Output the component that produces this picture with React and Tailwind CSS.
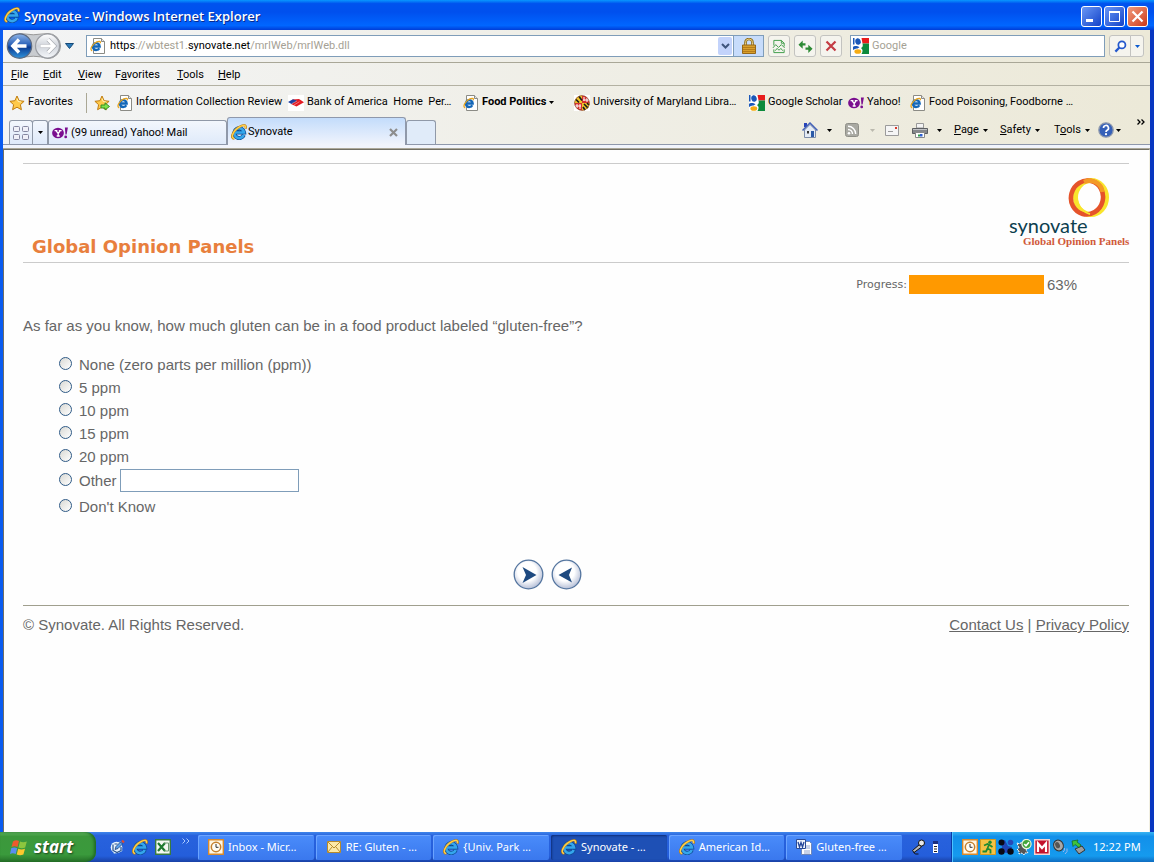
import React from 'react';

const ui = "font-[Roboto,sans-serif]";

function IELogo({ className = 'size-4' }) {
  return (
    <svg viewBox="0 0 16 16" className={`shrink-0 ${className}`} aria-hidden="true">
      <path d="M12.800 11A4.900 4.900 0 1 1 13.100 8.600H4" fill="none" stroke="#0b478f" strokeWidth="4" />
      <path d="M12.700 10.900A4.900 4.900 0 1 1 13 8.500H4.200" fill="none" stroke="#35a6ec" strokeWidth="2.700" />
      <path d="M3.300 14.700C-1.400 14.600 1.900 6 9.200 2.400C13 .5 15.800.9 14.500 4.600" fill="none" stroke="#b9780c" strokeWidth="2.200" />
      <path d="M3.200 14.500C-1.100 13.900 2.300 6 9.400 2.400C12.800.8 15.300 1 14.400 4.300" fill="none" stroke="#ffd04a" strokeWidth="1.400" />
    </svg>
  );
}

function IEPage() {
  return (
    <svg viewBox="0 0 16 16" className="size-4 shrink-0" aria-hidden="true">
      <path d="M3.500.5h8l3 3v12h-11z" fill="#fff" stroke="#8b8b85" />
      <path d="M11.500.5v3h3" fill="#e6e6e6" stroke="#8b8b85" />
      <path d="M9.300 10.200A3.400 3.400 0 1 1 9.700 8.500H3.500" fill="none" stroke="#1467b8" strokeWidth="2.300" />
      <path d="M2.200 12.800C-1 11.800 2.500 5.800 6.800 3.900C9 3 11 3.100 10.200 5.200" fill="none" stroke="#e9a41b" strokeWidth="1.300" />
    </svg>
  );
}

function Star({ add }) {
  return (
    <svg viewBox="0 0 16 16" className="size-4 shrink-0" aria-hidden="true">
      <path d="M8 1l2.100 4.700 5 .6-3.700 3.400 1 5L8 12.200l-4.400 2.500 1-5L.9 6.300l5-.6z" fill="#ffc94a" stroke="#c07c10" />
      <path d="M8 3.500l1.200 3 3 .5" fill="none" stroke="#fff3b8" />
      {add && <path d="M7 10h4V7.800l4.500 3.700L11 15v-2H7z" fill="#7fe04a" stroke="#2f8a1d" strokeWidth=".9" />}
    </svg>
  );
}

function GoogleIcon() {
  return (
    <svg viewBox="0 0 16 16" className="size-4 shrink-0" aria-hidden="true">
      <path d="M0 0h16v16H0z" fill="#fff" />
      <path d="M8.500 0H16v5.500H9.500z" fill="#e81c1c" />
      <path d="M9.500 5.500H16V16H8.500c1.500-2.500 1.500-4.500-.5-6 2-1 2-2.500 1.500-4.500z" fill="#0c8a3c" />
      <path d="M0 0h1.500v6.500H0z" fill="#1b58b8" />
      <ellipse cx="5" cy="3.500" rx="2.700" ry="3.300" fill="#1b58b8" transform="rotate(-15 5 3.500)" />
      <path d="M0 9c1-1.500 4.500-1.500 6.500.3L4.500 10.500C3 10.300 1.500 10.800 0 12z" fill="#1b58b8" />
      <ellipse cx="4.800" cy="13.500" rx="3.400" ry="2.300" fill="#f5ac14" />
    </svg>
  );
}

function YahooIcon() {
  return (
    <svg viewBox="0 0 16 16" className="size-4 shrink-0" aria-hidden="true">
      <ellipse cx="6" cy="8" rx="5.900" ry="5.200" fill="#7b0f8f" />
      <path d="M2.600 5.700h2.800M6.800 5.700h2.800M4 5.700l2.200 2.800v2.500M8.200 5.700l-2 2.800M4.700 11h3" stroke="#fff" strokeWidth="1.300" fill="none" />
      <path d="M12.900 2.500h3l-1.300 7h-1.200z" fill="#7b0f8f" />
      <circle cx="13.700" cy="11.900" r="1.400" fill="#7b0f8f" />
    </svg>
  );
}

function BankIcon() {
  return (
    <svg viewBox="0 0 16 16" className="size-4 shrink-0" aria-hidden="true">
      <path d="M0 0h16v16H0z" fill="#fff" />
      <path d="M4.500 4.500L11 4l5 3.200-7.500 4.300L3 9z" fill="#e31b23" />
      <path d="M0 7l5-2.800 4 1.600L3.500 9z" fill="#1d3fa0" />
      <path d="M3.500 8.800L9 6M6 10l5.500-3.300" stroke="#fff" strokeWidth=".4" />
    </svg>
  );
}

function MarylandIcon() {
  return (
    <svg viewBox="0 0 16 16" className="size-4 shrink-0" aria-hidden="true">
      <path d="M0 0h16v16H0z" fill="#fff" />
      <circle cx="8" cy="8" r="7.600" fill="#d83030" />
      <path d="M8 8V.4A7.600 7.600 0 0 0 .4 8z" fill="#f2c52a" />
      <path d="M8 8v7.600A7.600 7.600 0 0 0 15.600 8z" fill="#f2c52a" />
      <path d="M2 4.500l3 3M5 1.500l3 4M10 9l4 4M13 8l2 2M9 12l2 3" stroke="#1a1a1a" strokeWidth="1.700" />
      <path d="M10 2v4M13 3v4M9 5h6M3 9v4M6 9v5M1 11h6" stroke="#fff" strokeWidth="1" />
      <circle cx="8" cy="8" r="7.400" fill="none" stroke="#7a4a2a" strokeWidth=".6" />
    </svg>
  );
}

function Caret({ className = 'text-black' }) {
  return (
    <svg viewBox="0 0 5 3" className={`h-[3px] w-[5px] shrink-0 ${className}`} aria-hidden="true">
      <path d="M0 0h5L2.500 3z" fill="currentColor" />
    </svg>
  );
}

function Clock() {
  return (
    <svg viewBox="0 0 16 16" className="size-4 shrink-0" aria-hidden="true">
      <path d="M.7.7h14.600v14.600H.7z" fill="#fff8e6" stroke="#d98a2b" strokeWidth="1.400" />
      <circle cx="8" cy="8" r="4.700" fill="#fffdf5" stroke="#c4802e" strokeWidth="1.500" />
      <path d="M8 5v3.300h2.500" fill="none" stroke="#333" />
    </svg>
  );
}

function TitleBar() {
  const base = 'flex size-[21px] items-center justify-center rounded-[3px] border border-white';
  return (
    <header className="flex h-[30px] shrink-0 items-center bg-[linear-gradient(#0997ff_0,#0053ee_12%,#0050ee_40%,#0066ff_85%,#003dd7_100%)] pr-[6px] pl-1">
      <IELogo />
      <h1 className="ml-1 flex-1 truncate pt-1 font-['Open_Sans',sans-serif] text-[13px] font-semibold text-white [text-shadow:1px_1px_#0a2a8a]">
        Synovate - Windows Internet Explorer
      </h1>
      <div className="flex gap-[2px] pt-[3px]">
        <button aria-label="Minimize" className={`${base} bg-linear-to-br from-[#6a96f5] to-[#1440c8]`}>
          <svg viewBox="0 0 19 19" className="size-[19px]"><path d="M4 12h7v3H4z" fill="#fff" /></svg>
        </button>
        <button aria-label="Maximize" className={`${base} bg-linear-to-br from-[#6a96f5] to-[#1440c8]`}>
          <svg viewBox="0 0 19 19" className="size-[19px]"><path d="M4.500 5v9.500h10V5M4 5h11" fill="none" stroke="#fff" /><path d="M4 4h11v2H4z" fill="#fff" /></svg>
        </button>
        <button aria-label="Close" className={`${base} bg-linear-to-br from-[#f09a7c] to-[#cc3410]`}>
          <svg viewBox="0 0 19 19" className="size-[19px]"><path d="M4.500 4.500l10 10M14.500 4.500l-10 10" stroke="#fff" strokeWidth="2.200" /></svg>
        </button>
      </div>
    </header>
  );
}

const toolBtn = 'flex h-[22px] items-center justify-center border border-[#c3c3c0] bg-[#f5f4ee]';

function AddressRow() {
  return (
    <div className="flex h-[33px] items-center border-b border-[#a9a797] pr-[6px] pl-[3px]">
      <svg viewBox="0 0 56 28" className="h-7 w-14 shrink-0" role="img" aria-label="Back and forward">
        <defs>
          <linearGradient id="nb" x1="0" y1="0" x2="0" y2="1"><stop offset="0" stopColor="#8db4e8" /><stop offset=".45" stopColor="#2c62b8" /><stop offset=".55" stopColor="#0c3c92" /><stop offset="1" stopColor="#2f93dc" /></linearGradient>
          <linearGradient id="nf" x1="0" y1="0" x2="0" y2="1"><stop offset="0" stopColor="#fff" /><stop offset=".5" stopColor="#cfd3da" /><stop offset="1" stopColor="#f6f8fb" /></linearGradient>
        </defs>
        <path d="M13 1.500Q27 4 42 1.500A12.500 12.500 0 0 1 42 26.500Q27 22 13 26.500z" fill="#c9ccd0" stroke="#999" />
        <circle cx="13.500" cy="14" r="12.200" fill="url(#nb)" stroke="#5d6a80" strokeWidth="1.200" />
        <circle cx="41.500" cy="14" r="12" fill="url(#nf)" stroke="#9a9da3" strokeWidth="1.200" />
        <path d="M7 14h13.500M13 7.500L6.800 14l6.200 6.500" fill="none" stroke="#fff" strokeWidth="3.400" />
        <path d="M34.500 14H48M42 7.500l6.200 6.500-6.200 6.500" fill="none" stroke="#a6a9b0" strokeWidth="4.200" />
        <path d="M34.500 14H48M42 7.500l6.200 6.500-6.200 6.500" fill="none" stroke="#fff" strokeWidth="3" />
      </svg>
      <button aria-label="Recent pages" className="mr-3 ml-[3px] flex w-[9px]">
        <svg viewBox="0 0 9 6" className="h-[6px] w-[9px]"><path d="M.5.5h8L4.500 5.500z" fill="#2a7ab8" stroke="#174a78" /></svg>
      </button>
      <div className="flex h-[22px] flex-1 items-center border border-[#7f9db9] bg-white pl-[3px]">
        <IEPage />
        <div role="textbox" aria-label="Address" contentEditable suppressContentEditableWarning className="ml-1 flex-1 pt-px text-[11px] whitespace-nowrap text-[#a5a194] outline-none">
          <span className="text-black">https</span>://wbtest1.<span className="text-black">synovate.net</span>/mrIWeb/mrIWeb.dll
        </div>
        <button aria-label="Show address history" className="mr-px flex h-[18px] w-[14px] items-center justify-center rounded-[2px] bg-[#c3d3fb]">
          <svg viewBox="0 0 9 6" className="h-[6px] w-[9px]"><path d="M1 1l3.500 3.500L8 1" fill="none" stroke="#3f557d" strokeWidth="2" /></svg>
        </button>
        <button aria-label="Security report" className="flex h-5 w-[30px] items-center justify-center border-l border-[#7f9db9] bg-[#c7dcfb]">
          <svg viewBox="0 0 14 16" className="h-4 w-[14px]">
            <path d="M3.500 8V4.500a3.500 3.500 0 0 1 7 0V8" fill="none" stroke="#8c6a16" strokeWidth="2.600" />
            <path d="M3.500 8V4.500a3.500 3.500 0 0 1 7 0V8" fill="none" stroke="#e8cf86" strokeWidth="1" />
            <path d="M.5 7h13v8.500H.5z" fill="#d9a02c" stroke="#96681a" />
            <path d="M1 9.500h12M1 11.500h12M1 13.500h12" stroke="#b67c1a" />
          </svg>
        </button>
      </div>
      <button aria-label="Compatibility view" className={`${toolBtn} ml-1 w-[22px] rounded-[3px]`}>
        <svg viewBox="0 0 14 16" className="h-[15px] w-[14px]" fill="none" stroke="#3a9a44"><path d="M1.500 7V1.500h8l3 3V8M9.500 1.500v3h3M1.500 11v3.500h11V11" /><path d="M.5 9.500l3-3.500 3 3 3-3 3.500 3.500M3 12.500l2-2.500 2 2 2-2 2 2.500" /></svg>
      </button>
      <button aria-label="Refresh" className={`${toolBtn} ml-1 w-[22px] rounded-[3px]`}>
        <svg viewBox="0 0 16 16" className="size-[15px]" fill="#2c8a34"><path d="M.5 6L5 1.500V4.500H8V7H5V10.500z" /><path d="M15.500 10.500L11 6v3H8v2.500h3V15z" /></svg>
      </button>
      <button aria-label="Stop" className={`${toolBtn} ml-1 w-[22px] rounded-[3px]`}>
        <svg viewBox="0 0 12 12" className="size-3"><path d="M1.500 1.500l9 9M10.500 1.500l-9 9" stroke="#c43c44" strokeWidth="2.200" /></svg>
      </button>
      <label className="ml-2 flex h-[22px] w-[255px] items-center border border-[#7f9db9] bg-white pl-[2px]">
        <GoogleIcon />
        <input aria-label="Search Google" placeholder="Google" className="ml-[3px] w-full min-w-0 pt-px text-[11px] outline-none placeholder:text-[#a5a194]" />
      </label>
      <button aria-label="Search" className={`${toolBtn} ml-1 w-[22px] rounded-l-[3px]`}>
        <svg viewBox="0 0 14 14" className="size-[13px]"><circle cx="8.500" cy="5.300" r="3.800" fill="#fff" stroke="#2458cc" strokeWidth="1.900" /><path d="M5.800 8L1.500 12.500" stroke="#2458cc" strokeWidth="2.400" /></svg>
      </button>
      <button aria-label="Search options" className={`${toolBtn} -ml-px w-[14px] rounded-r-[3px]`}><Caret className="text-[#0a5ad0]" /></button>
    </div>
  );
}

function MenuRow() {
  const items = [['', 'F', 'ile', 'w-[32px]'], ['', 'E', 'dit', 'w-[35px]'], ['', 'V', 'iew', 'w-[37px]'], ['F', 'a', 'vorites', 'w-[62px]'], ['', 'T', 'ools', 'w-[41px]'], ['', 'H', 'elp', 'w-[40px]']];
  return (
    <nav aria-label="Menu bar" className="flex h-[23px] items-center border-b border-[#b3b1a2] pt-[2px] pl-2 text-[11px]">
      {items.map(([a, b, c, w]) => (
        <button key={b + c} className={`${w} text-left whitespace-nowrap`}>{a}<span className="underline">{b}</span>{c}</button>
      ))}
    </nav>
  );
}

function Fav({ icon, className, children }) {
  return <a href="#" className={`flex items-center gap-[3px] whitespace-nowrap ${className}`}>{icon}{children}</a>;
}

function FavoritesRow() {
  return (
    <nav aria-label="Favorites bar" className="flex h-8 items-center pt-px pl-[6px] text-[11px]">
      <button className="flex w-[77px] items-center gap-[3px]"><Star />Favorites</button>
      <div className="h-5 w-px bg-[#aaa795]" />
      <button aria-label="Add to favorites bar" className="w-[30px] pl-[7px]"><Star add /></button>
      <Fav className="w-[171px]" icon={<IEPage />}>Information Collection Review</Fav>
      <Fav className="w-[175px]" icon={<BankIcon />}>Bank of America&nbsp; Home&nbsp; Per…</Fav>
      <Fav className="w-[111px] font-bold" icon={<IEPage />}>Food Politics <Caret /></Fav>
      <Fav className="w-[175px]" icon={<MarylandIcon />}>University of Maryland Libra…</Fav>
      <Fav className="w-[99px]" icon={<GoogleIcon />}>Google Scholar</Fav>
      <Fav className="w-[62px]" icon={<YahooIcon />}>Yahoo!</Fav>
      <Fav icon={<IEPage />}>Food Poisoning, Foodborne …</Fav>
    </nav>
  );
}

function TabRow() {
  const tab = 'flex h-6 items-center rounded-t-[3px] border border-b-0 border-[#9099a8] bg-linear-to-b from-[#f3f7fd] to-[#dfeafa]';
  return (
    <div className="flex h-[27px] items-end border-b border-[#8f98ab] pl-[6px] text-[11px]">
      <button aria-label="Quick tabs" className={`${tab} w-[24px] justify-center`}>
        <svg viewBox="0 0 16 14" className="h-[14px] w-4" fill="#f0f0f8" stroke="#8487a0"><rect x=".5" y=".5" width="6" height="5" rx="1" /><rect x="9.500" y=".5" width="6" height="5" rx="1" /><rect x=".5" y="8.500" width="6" height="5" rx="1" /><rect x="9.500" y="8.500" width="6" height="5" rx="1" /></svg>
      </button>
      <button aria-label="Tab list" className={`${tab} -ml-px w-[16px] justify-center`}><Caret /></button>
      <button className={`${tab} w-[179px] gap-[3px] pt-px pl-[3px] whitespace-nowrap`}><YahooIcon />(99 unread) Yahoo! Mail</button>
      <div className="-mb-px flex h-7 w-[179px] items-center rounded-t-[3px] border border-b-0 border-[#8f98ab] bg-linear-to-b from-[#c3dcfb] to-[#f1f4fc] pt-px pr-[7px] pl-[3px]">
        <IELogo />
        <span className="flex-1 pl-px">Synovate</span>
        <button aria-label="Close tab" className="flex"><svg viewBox="0 0 9 9" className="size-[9px]"><path d="M1 1l7 7M8 1L1 8" stroke="#8d8d8d" strokeWidth="2.200" /></svg></button>
      </div>
      <button aria-label="New tab" className="h-6 w-[30px] rounded-t-[3px] border border-b-0 border-[#9099a8] bg-[#e0ebf9]" />
      <div className="flex-1" />
      <div className="flex h-[27px] items-center pb-px whitespace-nowrap">
        <button aria-label="Home" className="flex w-[43px] items-center gap-[9px]">
          <svg viewBox="0 0 16 16" className="size-4"><path d="M2 1h3v4H2z" fill="#2743b8" /><path d="M2.500 8L8 2.500 13.500 8v7.500h-11z" fill="#e4ebf5" stroke="#7d8ca8" /><path d="M.5 8.500L8 1l7.500 7.500" fill="none" stroke="#4361b8" strokeWidth="1.500" /><path d="M9 9h3v6H9z" fill="#2b5aa8" /><path d="M5 9h2v2.500H5z" fill="#333" /></svg>
          <Caret />
        </button>
        <button aria-label="Feeds" className="flex w-10 items-center gap-[11px]">
          <svg viewBox="0 0 14 14" className="size-[14px]"><rect x=".5" y=".5" width="13" height="13" rx="2" fill="#a9a9a2" stroke="#8f8f88" /><circle cx="4" cy="10.200" r="1.300" fill="#fff" /><path d="M3 6.500a4.500 4.500 0 0 1 4.500 4.500M3 3.300a7.700 7.700 0 0 1 7.700 7.700" fill="none" stroke="#fff" strokeWidth="1.400" /></svg>
          <Caret className="text-[#bbb9ae]" />
        </button>
        <button aria-label="Read mail" className="w-[27px]">
          <svg viewBox="0 0 14 11" className="h-[11px] w-[14px]"><path d="M.5.5h13v10H.5z" fill="#f5f5f5" stroke="#9b9b9b" /><path d="M10 2h2v2h-2z" fill="#d93a2b" /><path d="M3 6.500h5" stroke="#999" /></svg>
        </button>
        <button aria-label="Print" className="flex w-[42px] items-center gap-[9px]">
          <svg viewBox="0 0 16 16" className="size-4"><path d="M4.500 1.500h7V6h-7z" fill="#f4f4f4" stroke="#999" /><path d="M.5 6.500h15v5H.5z" fill="#85878b" stroke="#5d5f62" /><path d="M1 7.500h14" stroke="#c0c2c5" /><path d="M3.500 10.500h9v5h-9z" fill="#fff" stroke="#888" /><path d="M6 12.500h2v2H6z" fill="#2e9b4b" /><path d="M8 12h2.500v2.500H8z" fill="#2c5fd0" /></svg>
          <Caret />
        </button>
        <button className="flex w-[46px] items-center gap-1"><span><u>P</u>age</span><Caret /></button>
        <button className="flex w-[54px] items-center gap-1"><span><u>S</u>afety</span><Caret /></button>
        <button className="flex w-[44px] items-center gap-1"><span>T<u>o</u>ols</span><Caret /></button>
        <button aria-label="Help" className="flex w-[39px] items-center gap-[2px]">
          <svg viewBox="0 0 16 16" className="size-4"><circle cx="8" cy="8" r="7.200" fill="#3560b8" stroke="#8d98ad" strokeWidth="1.300" /><path d="M5.500 6a2.500 2.500 0 1 1 3.600 2.200Q8 8.800 8 10" fill="none" stroke="#fff" strokeWidth="1.700" /><circle cx="8" cy="12.200" r="1.100" fill="#fff" /></svg>
          <Caret />
        </button>
        <button aria-label="More commands" className="self-start pr-[5px]">
          <svg viewBox="0 0 8 6" className="mt-[2px] h-[6px] w-2"><path d="M.5.5L3 3 .5 5.500M4.500.5L7 3 4.500 5.500" fill="none" stroke="#000" strokeWidth="1.300" /></svg>
        </button>
      </div>
    </div>
  );
}

function SurveyHeader() {
  return (
    <div className="flex h-[100px] items-end justify-between border-y border-[#cbcbcb]">
      <h2 className="pb-[3px] pl-[9px] font-['DejaVu_Sans',sans-serif] text-[18px] leading-6 font-bold text-[#e87f3d]">Global Opinion Panels</h2>
      <div className="flex w-[120px] flex-col pb-[15px] text-[#0d3f4f]">
        <svg viewBox="0 0 44 42" className="-mb-1 ml-[58px] h-[42px] w-[44px]" aria-hidden="true">
          <ellipse cx="24" cy="20.500" rx="15.500" ry="17" fill="none" stroke="#f9e52c" strokeWidth="5" />
          <ellipse cx="20" cy="20.500" rx="16" ry="17" fill="none" stroke="#e5532a" strokeWidth="4.600" transform="rotate(15 20 20.500)" />
          <path d="M17 5C25 1.500 34.500 6 35.500 15" fill="none" stroke="#f39a26" strokeWidth="4.400" />
          <path d="M11 11C7 20 11 34 23 37" fill="none" stroke="#f9e52c" strokeWidth="2" />
        </svg>
        <span className="font-[Lato,sans-serif] text-[20px] leading-5">synovate</span>
        <span className="pl-[14px] font-['Liberation_Serif',serif] text-[11px] leading-3 font-bold whitespace-nowrap text-[#d0593a]">Global Opinion Panels</span>
      </div>
    </div>
  );
}

function Radio({ id, label, className = 'h-[23px]', children }) {
  return (
    <div className={`flex items-center ${className}`}>
      <input type="radio" name="gluten" id={id} className="mb-[3px] size-[13px] appearance-none rounded-full border border-[#2f5a86] bg-linear-to-br from-[#d9d9d4] to-white checked:bg-[#21a121]" />
      <label htmlFor={id} className="ml-[7px]">{label}</label>
      {children}
    </div>
  );
}

function NavButton({ label, back }) {
  return (
    <button aria-label={label} className="size-[31px]">
      <svg viewBox="0 0 31 31" className="size-[31px]">
        <defs><radialGradient id={back ? 'rb' : 'rn'} cx=".45" cy=".4" r=".65"><stop offset=".5" stopColor="#fff" /><stop offset="1" stopColor="#a9b4d0" /></radialGradient></defs>
        <circle cx="15.500" cy="15.500" r="14.300" fill={back ? 'url(#rb)' : 'url(#rn)'} stroke="#54759f" strokeWidth="1.300" />
        <path d={back ? 'M7.500 16L21 8.500 18 16l3 7.500z' : 'M23.500 16L9.500 8l3.500 8-3.500 8z'} fill="#1e4a80" />
      </svg>
    </button>
  );
}

function Survey() {
  return (
    <main className="flex-1 border-t border-r border-l border-t-[#716f64] border-r-[#f1efe2] border-l-[#716f64] bg-[#fefefe] pt-[13px] pr-5 pl-[19px] font-['Liberation_Sans',Arial,sans-serif] text-[15px] leading-[18px] text-[#666]">
      <SurveyHeader />
      <div className="mt-3 flex h-[19px] items-center justify-end pr-[52px]">
        <span className="font-['DejaVu_Sans',sans-serif] text-[11px]">Progress:</span>
        <div role="progressbar" aria-valuenow={63} aria-label="Progress" className="mr-[3px] ml-[2px] h-[19px] w-[135px] bg-[#ff9900]" />
        <span>63%</span>
      </div>
      <form onSubmit={(e) => e.preventDefault()}>
        <fieldset>
          <legend className="pt-[23px]">As far as you know, how much gluten can be in a food product labeled “gluten-free”?</legend>
          <div className="pt-[18px] pl-9">
            <Radio id="none" label="None (zero parts per million (ppm))" />
            <Radio id="p5" label="5 ppm" />
            <Radio id="p10" label="10 ppm" />
            <Radio id="p15" label="15 ppm" />
            <Radio id="p20" label="20 ppm" />
            <Radio id="other" label="Other" className="h-[26px]">
              <input aria-label="Other amount" className="mb-[2px] ml-[3px] h-[23px] w-[179px] border border-[#7f9db9] bg-white px-1" />
            </Radio>
            <Radio id="dk" label="Don't Know" className="h-[26px]" />
          </div>
        </fieldset>
        <div className="flex justify-center gap-[7px] pt-[39px] pr-[58px]">
          <NavButton label="Next" />
          <NavButton label="Previous" back />
        </div>
      </form>
      <footer className="mt-[15px] flex justify-between border-t border-[#a09f8e] pt-[10px]">
        <span>© Synovate. All Rights Reserved.</span>
        <span><a href="#" className="underline">Contact Us</a> | <a href="#" className="underline">Privacy Policy</a></span>
      </footer>
    </main>
  );
}

function Task({ icon, label, active }) {
  return (
    <button className={`flex h-[25px] min-w-0 flex-1 items-center gap-1 rounded-[2px] pl-[10px] whitespace-nowrap ${active ? 'bg-[#1e50b5] shadow-[inset_1px_1px_2px_#0f2f7a]' : 'bg-linear-to-b from-[#4a8cfa] to-[#3a78ee] shadow-[inset_1px_1px_#6ba4ff]'}`}>
      {icon}{label}
    </button>
  );
}

function Taskbar() {
  return (
    <footer className="flex h-[30px] shrink-0 items-stretch bg-[linear-gradient(#3f86ea_0,#2862dd_12%,#245edb_80%,#1941a5_100%)] font-['Noto_Sans',sans-serif] text-[11px] text-white">
      <button className="flex w-[96px] items-center gap-[6px] rounded-r-[10px] bg-[linear-gradient(#5fb35f_0,#3c983c_15%,#3a9a3c_75%,#256f28_100%)] pl-[10px] font-['Open_Sans',sans-serif] text-[17px] font-bold italic shadow-[inset_-2px_0_3px_#1f6a24] [text-shadow:1px_1px_2px_#1d3f1d]">
        <svg viewBox="0 0 18 17" className="h-[17px] w-[18px]" aria-hidden="true"><path d="M3 2.500Q6 .5 9 2L7.500 8Q4.500 6.500 1.500 8z" fill="#ee5a2c" /><path d="M10 2.500Q13 4 16.800 2.500L15.200 8.500Q12 10 8.500 8.500z" fill="#8cc63e" /><path d="M1.200 9.300Q4.200 7.800 7.200 9.300L5.700 15Q2.700 13.500 0 15z" fill="#5a8ef0" /><path d="M8.200 9.700Q11.500 11.200 15 9.700L13.400 15.500Q10 17 6.700 15.500z" fill="#fbc82e" /></svg>
        start
      </button>
      <div className="flex w-[102px] items-center gap-[7px] pl-[13px]">
        <svg viewBox="0 0 16 16" className="size-4" aria-label="Show desktop"><path d="M3 4.500L12 3l1 9-8 2.500z" fill="#fff" stroke="#7fb0ea" /><circle cx="7.500" cy="8.500" r="5.800" fill="#e9f3fd" /><path d="M4 5.500v6l4 2 4-2V8M5.500 5h3" fill="none" stroke="#24508f" strokeWidth="1.200" /><path d="M6 10.500l1-3 4.500-4.500 2 2L9 9.500z" fill="#5ba0ea" stroke="#1f3f78" strokeWidth=".8" /><path d="M13 1.500l2 2" stroke="#e34a2a" strokeWidth="2" /></svg>
        <IELogo />
        <svg viewBox="0 0 16 16" className="size-4" aria-label="Excel"><path d="M.7.700h14.600v14.600H.7z" fill="#f4f8f2" stroke="#3a7a40" strokeWidth="1.400" /><path d="M3 4l7 8M10 4l-7 8" stroke="#1f7a30" strokeWidth="2.200" /><path d="M9 4h4.500v8H9" fill="none" stroke="#6a9a70" /></svg>
        <svg viewBox="0 0 8 6" className="mb-3 ml-1 h-[6px] w-2" aria-hidden="true"><path d="M.5.500L3 3 .5 5.500M4.500.5L7 3 4.500 5.500" fill="none" stroke="#a9c9ff" /></svg>
      </div>
      <div className="flex flex-1 items-center gap-[2px] pr-[9px]">
        <Task icon={<Clock />} label="Inbox - Micr…" />
        <Task label="RE: Gluten - …" icon={<svg viewBox="0 0 14 12" className="mx-px h-3 w-[14px]"><path d="M.5.500h13v11H.5z" fill="#fbe9a8" stroke="#b58a2e" /><path d="M1 1l6 6 6-6M1 11l4-5M13 11L9 6" fill="none" stroke="#b58a2e" /></svg>} />
        <Task icon={<IELogo />} label="{Univ. Park …" />
        <Task icon={<IELogo />} label="Synovate - …" active />
        <Task icon={<IELogo />} label="American Id…" />
        <Task label="Gluten-free …" icon={<svg viewBox="0 0 16 16" className="size-4"><path d="M5.500 2.500h8l2 2v11h-10z" fill="#fff" stroke="#6f86b8" /><path d="M10 7h4M10 9h4M8 12h6M8 14h6" stroke="#8fa4d0" /><path d="M.5.500h9v9h-9z" fill="#eef3fc" stroke="#2a4a94" /><path d="M2 3l1.500 5L5 3.500 6.500 8 8 3" fill="none" stroke="#24469a" strokeWidth="1.300" /></svg>} />
      </div>
      <div className="flex w-10 items-center gap-2">
        <svg viewBox="0 0 14 16" className="h-4 w-[14px]" aria-label="Microphone"><path d="M8.500 5.500L1.500 11.500l1.500 2 7.500-5.500z" fill="#b9b9b9" stroke="#111" /><circle cx="10.500" cy="4" r="3" fill="#e8e8e8" stroke="#111" /><path d="M2.500 13q1 3 5 2" fill="none" stroke="#111" /></svg>
        <svg viewBox="0 0 5 12" className="h-3 w-[5px]" aria-label="Language bar"><path d="M0 0h5v3H0z" fill="#1b2f80" /><path d="M0 3h5v9H0z" fill="#fff" /><path d="M1 5.500h3M1 8h3M1 10.500h3" stroke="#222" /></svg>
      </div>
      <div className="flex w-[203px] items-center gap-[2px] border-l border-[#0c3aa5] bg-[linear-gradient(#39b4f2_0,#1290ea_15%,#159aee_80%,#0f6cc0_100%)] pl-[10px] shadow-[inset_1px_0_#4cc4ff]">
        <Clock />
        <svg viewBox="0 0 16 16" className="size-4" aria-label="Messenger"><path d="M.5.500h15v15H.5z" fill="#f3c245" stroke="#d39a1e" /><circle cx="10" cy="3.300" r="1.700" fill="#1f8a32" /><path d="M4 6.500l3.500-1.500 2 1L12.500 8M8.800 6L7.500 9.500l3 1.500v3.500M7.500 9.500L6 12.500H2.500" fill="none" stroke="#1f8a32" strokeWidth="1.800" /></svg>
        <svg viewBox="0 0 16 16" className="size-4" aria-label="Network"><path d="M3 2l4-1 3 6 4 1-1 5-5 1-5-2 1-4z" fill="#1f45b5" /><circle cx="3.500" cy="3.500" r="3" fill="#0a0a14" /><circle cx="3.500" cy="12.500" r="3.200" fill="#0a0a14" /><circle cx="12.500" cy="12.500" r="3.200" fill="#0a0a14" /><circle cx="12.500" cy="3.500" r="2.800" fill="#2749b8" /></svg>
        <svg viewBox="0 0 16 16" className="size-4" aria-label="Updates"><path d="M1 4l3 1 1-2 3 3 3 3-1 2 2 3-3 0-1 2-2-2-3 1 0-3-2-1 2-2z" fill="#555" stroke="#fff" strokeDasharray="2 1" /><circle cx="10.500" cy="5" r="4.600" fill="#42a53a" stroke="#e8f5e0" strokeWidth="1.200" /><path d="M8.300 5l1.700 1.800 3-3.500" fill="none" stroke="#fff" strokeWidth="1.600" /></svg>
        <svg viewBox="0 0 16 16" className="size-4" aria-label="Antivirus"><path d="M.7.700h14.600v14.600H.7z" fill="#c3122c" stroke="#f3d4d4" strokeWidth="1.400" /><path d="M4 13V4.500L8 9l4-4.500V13" fill="none" stroke="#fff" strokeWidth="2.200" /></svg>
        <svg viewBox="0 0 16 16" className="size-4" aria-label="Volume"><ellipse cx="6.500" cy="6.500" rx="4.800" ry="5.500" fill="#a8a8a8" stroke="#333" transform="rotate(-25 6.500 6.500)" /><ellipse cx="5.500" cy="6" rx="2.200" ry="3.200" fill="#555" transform="rotate(-25 6 6)" /><path d="M11 13q2-1.500 1.500-4M13 15q3-2 2-5.500" fill="none" stroke="#9ab8f0" /></svg>
        <svg viewBox="0 0 16 16" className="size-4" aria-label="Safely remove hardware"><path d="M5 10l7-3 3 4-6 4z" fill="#9a9da0" stroke="#333" /><path d="M2 2l6-1-1 2 4 3-2 2.500-4-3-2 2z" fill="#3fc23a" stroke="#14661a" strokeWidth=".7" /></svg>
        <time className="pl-[5px] whitespace-nowrap">12:22 PM</time>
      </div>
    </footer>
  );
}

export default function App() {
  return (
    <div className={`flex min-h-screen flex-col bg-[#0a50e0] text-black ${ui}`}>
      <TitleBar />
      <div className="flex flex-1 flex-col border-r-[4px] border-l-[3px] border-r-[#0836c0] border-l-[#0a5bf0] bg-white">
        <div className="bg-linear-to-r from-[#f3f4f5] to-[#ece9d8]">
          <AddressRow />
          <MenuRow />
          <FavoritesRow />
          <TabRow />
          <div className="h-1 border-b border-[#aca899] bg-[#f1f4fc]" />
        </div>
        <Survey />
      </div>
      <Taskbar />
    </div>
  );
}
